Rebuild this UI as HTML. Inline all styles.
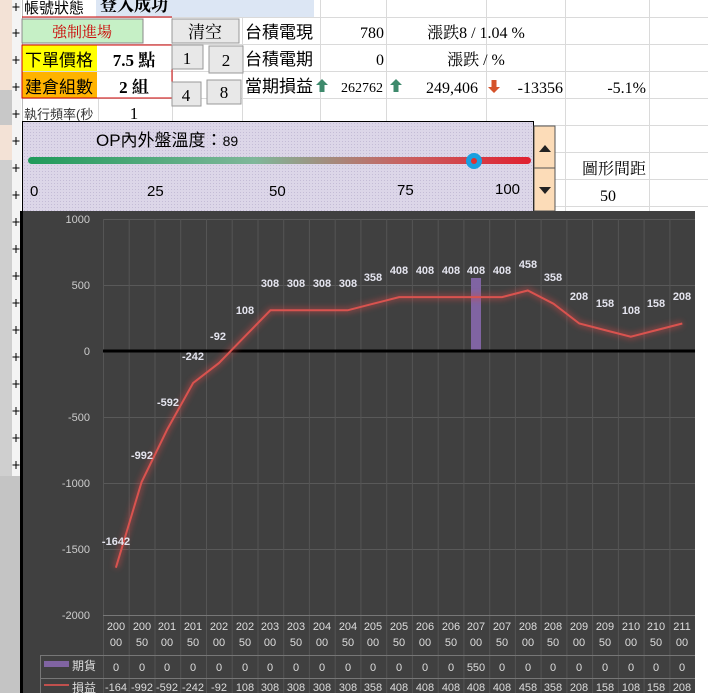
<!DOCTYPE html>
<html><head><meta charset="utf-8"><style>
body{margin:0;width:708px;height:693px;overflow:hidden;background:#fff}
svg{display:block}
text{font-family:"Liberation Serif","Noto Serif CJK SC",serif}
.s, .s text{font-family:"Liberation Sans","Noto Sans CJK TC",sans-serif}
</style></head><body>
<svg width="708" height="693" viewBox="0 0 708 693" xmlns="http://www.w3.org/2000/svg">
<defs>
<pattern id="dot" width="3" height="3" patternUnits="userSpaceOnUse"><rect width="3" height="3" fill="#dcd6e8"/><rect width="1" height="1" fill="#c4bcd6"/></pattern>
<linearGradient id="g" x1="0" x2="1" y1="0" y2="0"><stop offset="0" stop-color="#1f9a5a"/><stop offset="0.45" stop-color="#7fb79a"/><stop offset="0.75" stop-color="#c96060"/><stop offset="1" stop-color="#e02030"/></linearGradient>
<filter id="glow" x="-10%" y="-10%" width="120%" height="120%"><feGaussianBlur stdDeviation="3"/></filter>
</defs>
<rect x="0" y="0" width="12" height="476" fill="#f3e2d6"/>
<rect x="0" y="90" width="12" height="35" fill="#c8c8c8"/>
<rect x="0" y="160" width="12" height="316" fill="#cfcfcf"/>
<rect x="0" y="476" width="22" height="217" fill="#c4c4c4"/>
<rect x="12" y="0" width="9" height="476" fill="#f4f4f4"/>
<g stroke="#000" stroke-width="1">
<line x1="12.5" y1="7" x2="19.5" y2="7"/><line x1="16" y1="3" x2="16" y2="11"/>
<line x1="12.5" y1="33" x2="19.5" y2="33"/><line x1="16" y1="29" x2="16" y2="37"/>
<line x1="12.5" y1="60" x2="19.5" y2="60"/><line x1="16" y1="56" x2="16" y2="64"/>
<line x1="12.5" y1="87" x2="19.5" y2="87"/><line x1="16" y1="83" x2="16" y2="91"/>
<line x1="12.5" y1="114" x2="19.5" y2="114"/><line x1="16" y1="110" x2="16" y2="118"/>
<line x1="12.5" y1="141" x2="19.5" y2="141"/><line x1="16" y1="137" x2="16" y2="145"/>
<line x1="12.5" y1="168" x2="19.5" y2="168"/><line x1="16" y1="164" x2="16" y2="172"/>
<line x1="12.5" y1="195" x2="19.5" y2="195"/><line x1="16" y1="191" x2="16" y2="199"/>
<line x1="12.5" y1="222" x2="19.5" y2="222"/><line x1="16" y1="218" x2="16" y2="226"/>
<line x1="12.5" y1="249" x2="19.5" y2="249"/><line x1="16" y1="245" x2="16" y2="253"/>
<line x1="12.5" y1="276" x2="19.5" y2="276"/><line x1="16" y1="272" x2="16" y2="280"/>
<line x1="12.5" y1="303" x2="19.5" y2="303"/><line x1="16" y1="299" x2="16" y2="307"/>
<line x1="12.5" y1="330" x2="19.5" y2="330"/><line x1="16" y1="326" x2="16" y2="334"/>
<line x1="12.5" y1="357" x2="19.5" y2="357"/><line x1="16" y1="353" x2="16" y2="361"/>
<line x1="12.5" y1="384" x2="19.5" y2="384"/><line x1="16" y1="380" x2="16" y2="388"/>
<line x1="12.5" y1="411" x2="19.5" y2="411"/><line x1="16" y1="407" x2="16" y2="415"/>
<line x1="12.5" y1="438" x2="19.5" y2="438"/><line x1="16" y1="434" x2="16" y2="442"/>
<line x1="12.5" y1="465" x2="19.5" y2="465"/><line x1="16" y1="461" x2="16" y2="469"/>
</g>
<g stroke="#dadada" stroke-width="1">
<line x1="22" y1="17.5" x2="708" y2="17.5"/><line x1="22" y1="44.5" x2="708" y2="44.5"/>
<line x1="22" y1="71.5" x2="708" y2="71.5"/><line x1="22" y1="98.5" x2="708" y2="98.5"/>
<line x1="22" y1="125.5" x2="708" y2="125.5"/><line x1="555" y1="152.5" x2="708" y2="152.5"/>
<line x1="555" y1="179.5" x2="708" y2="179.5"/><line x1="555" y1="206.5" x2="708" y2="206.5"/>
<line x1="98.5" y1="98" x2="98.5" y2="121"/><line x1="172.5" y1="17" x2="172.5" y2="121"/>
<line x1="242.5" y1="17" x2="242.5" y2="121"/><line x1="320.5" y1="0" x2="320.5" y2="121"/>
<line x1="386.5" y1="0" x2="386.5" y2="121"/><line x1="486.5" y1="0" x2="486.5" y2="121"/>
<line x1="565.5" y1="0" x2="565.5" y2="211"/><line x1="649.5" y1="0" x2="649.5" y2="211"/>
</g>
<rect x="22" y="0" width="1" height="121" fill="#bbb"/>
<rect x="96" y="0" width="218" height="17" fill="#dce6f4"/>
<text x="24" y="13" font-size="15" class="s">帳號狀態</text>
<text x="100" y="11" font-size="17" font-weight="bold">登入成功</text>
<line x1="22" y1="17" x2="172" y2="17" stroke="#c00" stroke-width="1"/>
<rect x="22" y="19" width="121" height="24" fill="#c6f0c6" stroke="#888"/>
<text x="82" y="37" font-size="15" fill="#c00" text-anchor="middle">強制進場</text>
<rect x="22" y="45" width="75" height="26" fill="#ffff00"/>
<rect x="22" y="72" width="75" height="26" fill="#ffb300"/>
<rect x="22" y="45" width="150" height="53" fill="none" stroke="#c00"/>
<text x="25" y="66" font-size="17" class="s">下單價格</text>
<text x="25" y="93" font-size="17" class="s">建倉組數</text>
<text x="134" y="66" font-size="17" font-weight="bold" text-anchor="middle">7.5 點</text>
<text x="134" y="93" font-size="17" font-weight="bold" text-anchor="middle">2 組</text>
<text x="24" y="119" font-size="13" class="s" fill="#333">執行頻率(秒</text>
<text x="134" y="119" font-size="17" text-anchor="middle">1</text>
<g fill="#e8e8e8" stroke="#999">
<rect x="172" y="19" width="67" height="24"/>
<rect x="172" y="45" width="31" height="24"/>
<rect x="209" y="46" width="34" height="27"/>
<rect x="172" y="82" width="29" height="24"/>
<rect x="207" y="80" width="34" height="24"/>
</g>
<g font-size="17" text-anchor="middle">
<text x="205" y="38">清空</text><text x="187" y="64">1</text><text x="226" y="66">2</text>
<text x="186" y="101">4</text><text x="224" y="98">8</text>
</g>
<g font-size="17" class="s">
<text x="245" y="38">台積電現</text><text x="245" y="65">台積電期</text><text x="245" y="92">當期損益</text>
</g>
<g font-size="16">
<text x="384" y="38" text-anchor="end">780</text>
<text x="384" y="65" text-anchor="end">0</text>
<text x="476" y="38" text-anchor="middle">漲跌8 / 1.04 %</text>
<text x="476" y="65" text-anchor="middle">漲跌 /  %</text>
<text x="383" y="92" text-anchor="end" font-size="14">262762</text>
<text x="478" y="93" text-anchor="end">249,406</text>
<text x="563" y="93" text-anchor="end">-13356</text>
<text x="646" y="93" text-anchor="end">-5.1%</text>
<text x="614" y="174" text-anchor="middle">圖形間距</text>
<text x="608" y="201" text-anchor="middle">50</text>
</g>
<g fill="#3e8a6c">
<path d="M322 79 l-6 6 h3.5 v7 h5 v-7 h3.5z"/>
<path d="M396 79 l-6 6 h3.5 v7 h5 v-7 h3.5z"/>
</g>
<path fill="#d5522a" d="M494 93 l-6 -6 h3.5 v-7 h5 v7 h3.5z"/>
<rect x="22.5" y="121.5" width="511" height="90" fill="url(#dot)" stroke="#000"/>
<text x="96" y="146" font-size="17" class="s">OP內外盤溫度：<tspan font-size="14">89</tspan></text>
<rect x="28" y="157" width="503" height="7" rx="3.5" fill="url(#g)"/>
<circle cx="474" cy="161" r="8" fill="#1aa0e0"/><circle cx="474" cy="161" r="3" fill="#e03030"/>
<g font-size="15" class="s">
<text x="30" y="196">0</text><text x="147" y="196">25</text><text x="269" y="196">50</text>
<text x="397" y="195">75</text><text x="495" y="194">100</text>
</g>
<rect x="534" y="126" width="21" height="85" fill="#fcdcb8" stroke="#555"/>
<line x1="534" y1="168" x2="555" y2="168" stroke="#555"/>
<path d="M539 152 l6 -7 l6 7z" fill="#222"/><path d="M539 187 l6 7 l6 -7z" fill="#222"/>
<rect x="20" y="211" width="675" height="482" fill="#404040"/>
<rect x="20" y="211" width="3" height="482" fill="#000"/>
<g stroke="#595959" stroke-width="1">
<line x1="103" y1="219.5" x2="695" y2="219.5"/><line x1="103" y1="285.5" x2="695" y2="285.5"/>
<line x1="103" y1="417.5" x2="695" y2="417.5"/><line x1="103" y1="483.5" x2="695" y2="483.5"/>
<line x1="103" y1="549.5" x2="695" y2="549.5"/>
</g>
<g stroke="#555" stroke-width="1">
<line x1="103.5" y1="219" x2="103.5" y2="693"/><line x1="129.2" y1="219" x2="129.2" y2="693"/><line x1="155" y1="219" x2="155" y2="693"/><line x1="180.7" y1="219" x2="180.7" y2="693"/><line x1="206.5" y1="219" x2="206.5" y2="693"/><line x1="232.2" y1="219" x2="232.2" y2="693"/><line x1="258" y1="219" x2="258" y2="693"/><line x1="283.7" y1="219" x2="283.7" y2="693"/><line x1="309.4" y1="219" x2="309.4" y2="693"/><line x1="335.2" y1="219" x2="335.2" y2="693"/><line x1="360.9" y1="219" x2="360.9" y2="693"/><line x1="386.7" y1="219" x2="386.7" y2="693"/><line x1="412.4" y1="219" x2="412.4" y2="693"/><line x1="438.2" y1="219" x2="438.2" y2="693"/><line x1="463.9" y1="219" x2="463.9" y2="693"/><line x1="489.7" y1="219" x2="489.7" y2="693"/><line x1="515.4" y1="219" x2="515.4" y2="693"/><line x1="541.1" y1="219" x2="541.1" y2="693"/><line x1="566.9" y1="219" x2="566.9" y2="693"/><line x1="592.6" y1="219" x2="592.6" y2="693"/><line x1="618.4" y1="219" x2="618.4" y2="693"/><line x1="644.1" y1="219" x2="644.1" y2="693"/><line x1="669.9" y1="219" x2="669.9" y2="693"/>
</g>
<g font-size="11" class="s" fill="#ccc" text-anchor="end">
<text x="90" y="223">1000</text><text x="90" y="289">500</text><text x="90" y="355">0</text>
<text x="90" y="421">-500</text><text x="90" y="487">-1000</text><text x="90" y="553">-1500</text><text x="90" y="619">-2000</text>
</g>
<rect x="471" y="278" width="10" height="73" fill="#8064a2"/>
<line x1="103" y1="351" x2="695" y2="351" stroke="#000" stroke-width="3"/>
<polyline fill="none" stroke="#d04a4a" stroke-width="6" opacity="0.45" filter="url(#glow)" points="115.9,567.7 141.6,482 167.4,429.1 193.1,383 218.9,363.1 244.6,336.7 270.4,310.3 296.1,310.3 321.8,310.3 347.6,310.3 373.3,303.7 399.1,297.1 424.8,297.1 450.6,297.1 476.3,297.1 502.1,297.1 527.8,290.5 553.5,303.7 579.3,323.5 605,330.1 630.8,336.7 656.5,330.1 682.3,323.5"/>
<polyline fill="none" stroke="#d9534f" stroke-width="2" points="115.9,567.7 141.6,482 167.4,429.1 193.1,383 218.9,363.1 244.6,336.7 270.4,310.3 296.1,310.3 321.8,310.3 347.6,310.3 373.3,303.7 399.1,297.1 424.8,297.1 450.6,297.1 476.3,297.1 502.1,297.1 527.8,290.5 553.5,303.7 579.3,323.5 605,330.1 630.8,336.7 656.5,330.1 682.3,323.5"/>
<g font-size="11" font-weight="bold" class="s" fill="#e4e4ee" text-anchor="middle">
<text x="116" y="545">-1642</text><text x="142" y="459">-992</text><text x="168" y="406">-592</text><text x="193" y="360">-242</text><text x="218" y="340">-92</text><text x="245" y="314">108</text>
<text x="270" y="287">308</text><text x="296" y="287">308</text><text x="322" y="287">308</text><text x="348" y="287">308</text>
<text x="373" y="281">358</text><text x="399" y="274">408</text><text x="425" y="274">408</text><text x="451" y="274">408</text><text x="476" y="274">408</text><text x="502" y="274">408</text>
<text x="528" y="268">458</text><text x="553" y="281">358</text><text x="579" y="300">208</text><text x="605" y="307">158</text><text x="631" y="314">108</text><text x="656" y="307">158</text><text x="682" y="300">208</text>
</g>
<g stroke="#777" stroke-width="1" fill="none">
<line x1="103" y1="615.5" x2="695" y2="615.5"/>
<line x1="40" y1="655.5" x2="695" y2="655.5"/>
<line x1="40" y1="678.5" x2="695" y2="678.5"/>
<line x1="40.5" y1="655" x2="40.5" y2="693"/>
</g>
<g font-size="11" class="s" fill="#ddd" text-anchor="middle">
<text x="116" y="630">200</text><text x="116" y="646">00</text>
<text x="142" y="630">200</text><text x="142" y="646">50</text>
<text x="167" y="630">201</text><text x="167" y="646">00</text>
<text x="193" y="630">201</text><text x="193" y="646">50</text>
<text x="219" y="630">202</text><text x="219" y="646">00</text>
<text x="245" y="630">202</text><text x="245" y="646">50</text>
<text x="270" y="630">203</text><text x="270" y="646">00</text>
<text x="296" y="630">203</text><text x="296" y="646">50</text>
<text x="322" y="630">204</text><text x="322" y="646">00</text>
<text x="348" y="630">204</text><text x="348" y="646">50</text>
<text x="373" y="630">205</text><text x="373" y="646">00</text>
<text x="399" y="630">205</text><text x="399" y="646">50</text>
<text x="425" y="630">206</text><text x="425" y="646">00</text>
<text x="451" y="630">206</text><text x="451" y="646">50</text>
<text x="476" y="630">207</text><text x="476" y="646">00</text>
<text x="502" y="630">207</text><text x="502" y="646">50</text>
<text x="528" y="630">208</text><text x="528" y="646">00</text>
<text x="553" y="630">208</text><text x="553" y="646">50</text>
<text x="579" y="630">209</text><text x="579" y="646">00</text>
<text x="605" y="630">209</text><text x="605" y="646">50</text>
<text x="631" y="630">210</text><text x="631" y="646">00</text>
<text x="656" y="630">210</text><text x="656" y="646">50</text>
<text x="682" y="630">211</text><text x="682" y="646">00</text>
<text x="116" y="671">0</text><text x="142" y="671">0</text><text x="167" y="671">0</text><text x="193" y="671">0</text><text x="219" y="671">0</text><text x="245" y="671">0</text><text x="270" y="671">0</text><text x="296" y="671">0</text><text x="322" y="671">0</text><text x="348" y="671">0</text><text x="373" y="671">0</text><text x="399" y="671">0</text><text x="425" y="671">0</text><text x="451" y="671">0</text><text x="476" y="671">550</text><text x="502" y="671">0</text><text x="528" y="671">0</text><text x="553" y="671">0</text><text x="579" y="671">0</text><text x="605" y="671">0</text><text x="631" y="671">0</text><text x="656" y="671">0</text><text x="682" y="671">0</text>
<text x="116" y="691">-164</text><text x="142" y="691">-992</text><text x="167" y="691">-592</text><text x="193" y="691">-242</text><text x="219" y="691">-92</text><text x="245" y="691">108</text><text x="270" y="691">308</text><text x="296" y="691">308</text><text x="322" y="691">308</text><text x="348" y="691">308</text><text x="373" y="691">358</text><text x="399" y="691">408</text><text x="425" y="691">408</text><text x="451" y="691">408</text><text x="476" y="691">408</text><text x="502" y="691">408</text><text x="528" y="691">458</text><text x="553" y="691">358</text><text x="579" y="691">208</text><text x="605" y="691">158</text><text x="631" y="691">108</text><text x="656" y="691">158</text><text x="682" y="691">208</text>
</g>
<rect x="44" y="661" width="25" height="6" fill="#8064a2"/>
<rect x="44" y="684" width="25" height="2" fill="#c0504d"/>
<text x="72" y="670" font-size="12" class="s" fill="#ddd">期貨</text>
<text x="72" y="692" font-size="12" class="s" fill="#ddd">損益</text>
</svg>
</body></html>
